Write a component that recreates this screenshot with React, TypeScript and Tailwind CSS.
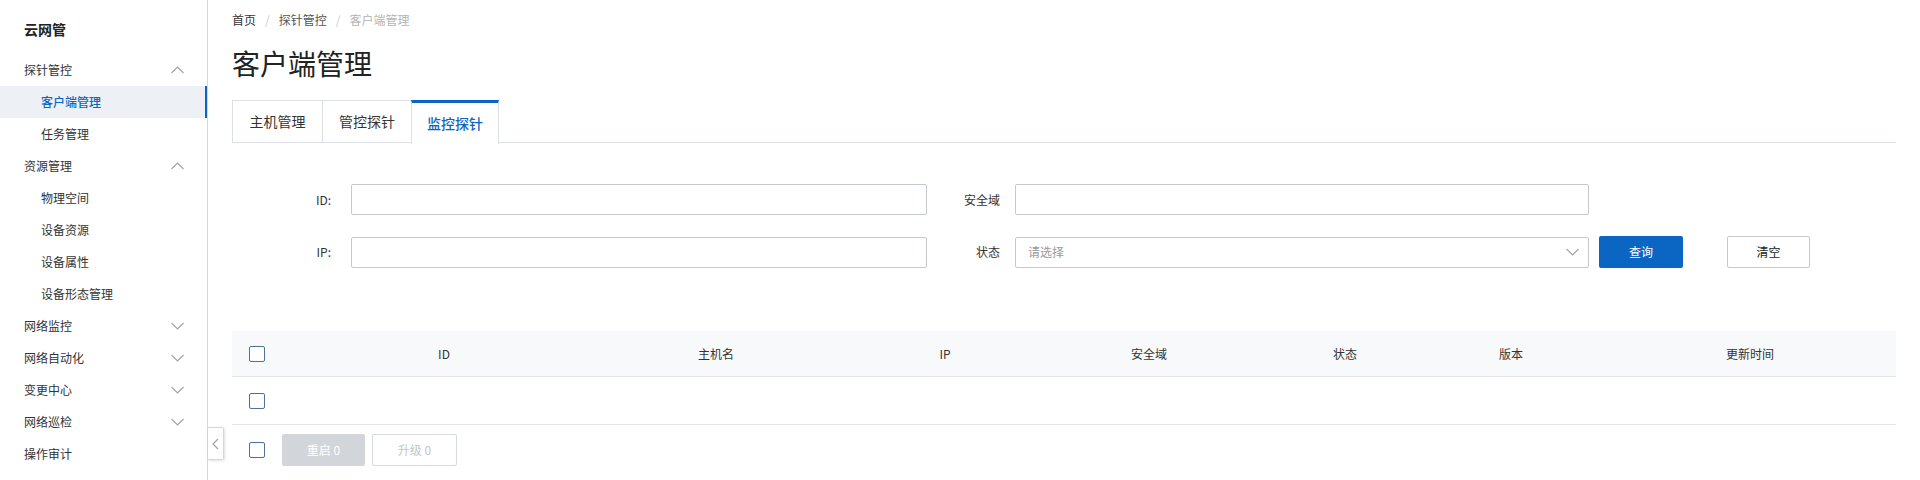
import React from 'react'

const font = { fontFamily: '"Noto Sans CJK SC", "Noto Sans", sans-serif' }

const Chevron = ({ dir }: { dir: 'up' | 'down' }) => (
  <svg width="13" height="8" viewBox="0 0 13 8" fill="none" stroke="#a0a4aa" strokeWidth="1.2">
    {dir === 'up' ? <polyline points="0.5,7 6.5,1 12.5,7" /> : <polyline points="0.5,1 6.5,7 12.5,1" />}
  </svg>
)

type NavItem = { label: string; level: 1 | 2; chevron?: 'up' | 'down'; active?: boolean }

const nav: NavItem[] = [
  { label: '探针管控', level: 1, chevron: 'up' },
  { label: '客户端管理', level: 2, active: true },
  { label: '任务管理', level: 2 },
  { label: '资源管理', level: 1, chevron: 'up' },
  { label: '物理空间', level: 2 },
  { label: '设备资源', level: 2 },
  { label: '设备属性', level: 2 },
  { label: '设备形态管理', level: 2 },
  { label: '网络监控', level: 1, chevron: 'down' },
  { label: '网络自动化', level: 1, chevron: 'down' },
  { label: '变更中心', level: 1, chevron: 'down' },
  { label: '网络巡检', level: 1, chevron: 'down' },
  { label: '操作审计', level: 1 },
]

const Sidebar = () => (
  <aside className="relative w-[208px] shrink-0 border-r border-[#d4d7dc] bg-white">
    <div className="h-[54px] pl-6 pt-[19px] text-[14px] font-bold leading-5 text-[#222]">云网管</div>
    {nav.map((n) => (
      <div
        key={n.label}
        className={
          'relative flex h-8 items-center text-[12px] ' +
          (n.active ? 'bg-[#edf1f6] font-medium text-[#0a66c2] ' : 'text-[#333] ') +
          (n.level === 1 ? 'pl-6' : 'pl-[41px]')
        }
      >
        <span>{n.label}</span>
        {n.chevron && (
          <span className="absolute left-[171px] top-[12px] flex">
            <Chevron dir={n.chevron} />
          </span>
        )}
        {n.active && <span className="absolute right-0 top-0 h-full w-[2px] bg-[#0a66c2]" />}
      </div>
    ))}
    <button className="absolute -right-[17px] top-[427px] flex h-[33px] w-4 items-center justify-center rounded-r-[2px] border border-l-0 border-[#d4d7dc] bg-white shadow-[1px_1px_3px_rgba(0,0,0,0.12)]">
      <svg width="7" height="12" viewBox="0 0 7 12" fill="none" stroke="#a0a4aa" strokeWidth="1.2">
        <polyline points="6,1 1,6 6,11" />
      </svg>
    </button>
  </aside>
)

const Checkbox = () => <span className="block h-4 w-4 rounded-[2px] border border-[#4d7199] bg-white" />

const cols = [
  { label: 'ID', w: 'w-[248px]' },
  { label: '主机名', w: 'w-[296px]' },
  { label: 'IP', w: 'w-[162px]' },
  { label: '安全域', w: 'w-[246px]' },
  { label: '状态', w: 'w-[146px]' },
  { label: '版本', w: 'w-[186px]' },
  { label: '更新时间', w: 'w-[292px]' },
]

const Input = ({ w }: { w: string }) => (
  <input className={`${w} h-[31px] rounded-[2px] border border-[#c5c9cf] bg-white px-3 text-[12px] outline-none`} />
)

export default function App() {
  return (
    <div className="flex h-[480px] w-[1920px] overflow-hidden bg-white" style={font}>
      <Sidebar />
      <main className="min-w-0 flex-1 px-6 pt-[10px]">
        <nav className="flex h-5 items-center gap-[9px] text-[12px]">
          <span className="text-[#333]">首页</span>
          <span className="text-[#ccc]">/</span>
          <span className="text-[#555]">探针管控</span>
          <span className="text-[#ccc]">/</span>
          <span className="text-[#b4b4b4]">客户端管理</span>
        </nav>
        <h1 className="mt-[13px] text-[28px] leading-10 text-[#222]">客户端管理</h1>

        <div className="mt-[17px] flex h-[43px] border-b border-[#dcdfe3]">
          <div className="flex w-[90px] items-center justify-center border-l border-t border-[#dcdfe3] text-[14px] text-[#333]">主机管理</div>
          <div className="flex w-[89px] items-center justify-center border-l border-t border-[#dcdfe3] text-[14px] text-[#333]">管控探针</div>
          <div className="-mb-px flex h-[44px] w-[88px] items-center justify-center border-x border-t-[3px] border-x-[#dcdfe3] border-t-[#0a66c2] bg-white text-[14px] font-medium text-[#0a66c2]">
            监控探针
          </div>
        </div>

        <div className="mt-[41px] flex flex-col gap-[21px] text-[12px] text-[#333]">
          <div className="flex items-center">
            <label className="w-[119px] pr-5 text-right">ID:</label>
            <Input w="w-[576px]" />
            <label className="w-[88px] pr-[15px] text-right">安全域</label>
            <Input w="w-[574px]" />
          </div>
          <div className="flex items-center">
            <label className="w-[119px] pr-5 text-right">IP:</label>
            <Input w="w-[576px]" />
            <label className="w-[88px] pr-[15px] text-right">状态</label>
            <div className="flex h-[31px] w-[574px] items-center justify-between rounded-[2px] border border-[#c5c9cf] bg-white pl-3 pr-[9px]">
              <span className="text-[#999]">请选择</span>
              <Chevron dir="down" />
            </div>
            <button className="ml-[10px] h-[32px] w-[84px] rounded-[2px] bg-[#0a66c2] text-[12px] text-white">查询</button>
            <button className="ml-[44px] h-[32px] w-[83px] rounded-[2px] border border-[#c5c9cf] bg-white text-[12px] text-[#222]">清空</button>
          </div>
        </div>

        <div className="mt-[63px] text-[12px] text-[#333]">
          <div className="flex h-[46px] items-center border-b border-[#e2e4e8] bg-[#f8f9fb]">
            <div className="w-[88px] pl-[17px]">
              <Checkbox />
            </div>
            {cols.map((c) => (
              <div key={c.label} className={`${c.w} text-center`}>
                {c.label}
              </div>
            ))}
          </div>
          <div className="flex h-[48px] items-center border-b border-[#e2e4e8]">
            <div className="w-[88px] pl-[17px]">
              <Checkbox />
            </div>
          </div>
          <div className="flex h-[49px] items-center">
            <div className="w-[50px] pl-[17px]">
              <Checkbox />
            </div>
            <button className="h-8 w-[83px] rounded-[2px] bg-[#d2d5da] text-[12px] text-white">重启 0</button>
            <button className="ml-[7px] h-8 w-[85px] rounded-[2px] border border-[#d6d9dd] bg-white text-[12px] text-[#c2c4c8]">升级 0</button>
          </div>
        </div>
      </main>
    </div>
  )
}
